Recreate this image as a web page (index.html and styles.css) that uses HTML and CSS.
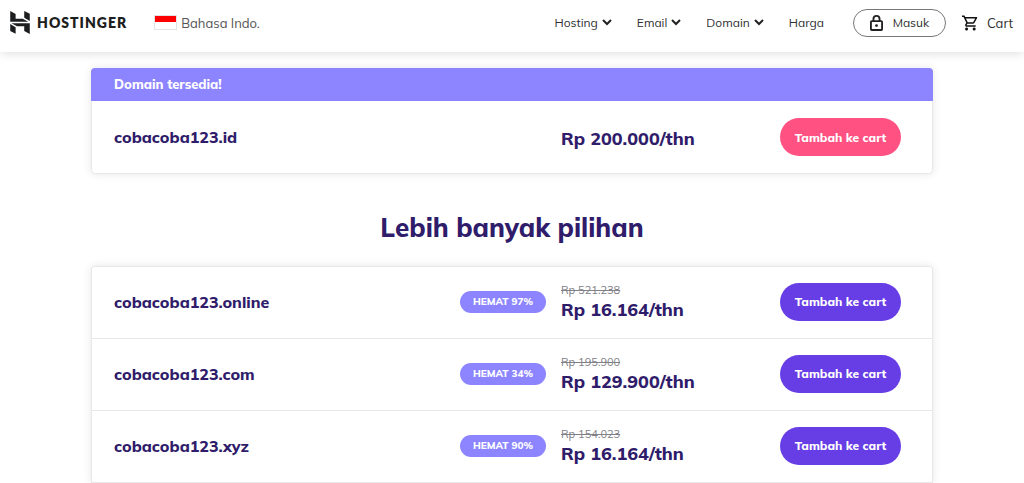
FILE: index.html
```html
<!DOCTYPE html>
<html lang="id">
<head>
<meta charset="utf-8">
<meta name="viewport" content="width=device-width, initial-scale=1">
<title>Hostinger</title>
<link rel="stylesheet" href="styles.css">
</head>
<body>
<header class="topbar">
  <a class="brand" href="#">
    <svg class="brand-mark" viewBox="1.8 0 20.4 24" aria-hidden="true"><path d="M16.415 0v7.160l5.785 3.384V2.949L16.415 0ZM1.800 0v11.237h18.815L14.890 8.090l-7.457-.003V3.024L1.800 0Zm14.615 20.894v-5.019l-7.514-.005-5.820-3.197 19.119.091V24l-5.785-3.106ZM1.800 13.551v7.343l5.633 2.949v-6.988l-5.633-3.304Z"/></svg>
    <span class="brand-name">HOSTINGER</span>
  </a>
  <a class="language" href="#"><span class="flag"></span>Bahasa Indo.</a>
  <nav class="menu">
    <a class="menu-link" href="#">Hosting<svg class="chevron" viewBox="0 0 10 7" aria-hidden="true"><path d="M1 1l4 4 4-4"/></svg></a>
    <a class="menu-link" href="#">Email<svg class="chevron" viewBox="0 0 10 7" aria-hidden="true"><path d="M1 1l4 4 4-4"/></svg></a>
    <a class="menu-link" href="#">Domain<svg class="chevron" viewBox="0 0 10 7" aria-hidden="true"><path d="M1 1l4 4 4-4"/></svg></a>
    <a class="menu-link" href="#">Harga</a>
  </nav>
  <a class="login" href="#"><svg class="lock" viewBox="0 0 14 17" aria-hidden="true"><path d="M1.800 6.500h10.400a.8.8 0 0 1 .8.8v7.900a.8.8 0 0 1-.8.8H1.800a.8.8 0 0 1-.8-.8V7.300a.8.8 0 0 1 .8-.8zM3.700 6.500V4.200a3.300 3.300 0 0 1 6.600 0v2.300"/><circle cx="7" cy="11.300" r="1.500"/></svg>Masuk</a>
  <a class="cart" href="#"><svg class="cart-icon" viewBox="1 2 21 20" aria-hidden="true"><path d="M15.550 13c.75 0 1.410-.41 1.750-1.030l3.580-6.490A.996.996 0 0 0 20.010 4H5.210l-.94-2H1v2h2l3.600 7.590-1.350 2.440C4.520 15.370 5.480 17 7 17h12v-2H7l1.100-2h7.450zM6.160 6h12.150l-2.760 5H8.530L6.160 6zM7 18c-1.100 0-1.990.9-1.990 2S5.900 22 7 22s2-.9 2-2-.9-2-2-2zm10 0c-1.100 0-1.990.9-1.990 2s.89 2 1.990 2 2-.9 2-2-.9-2-2-2z"/></svg>Cart</a>
</header>
<main class="results">
  <section class="card">
    <h2 class="card-title">Domain tersedia!</h2>
    <div class="row">
      <h3 class="name">cobacoba123.id</h3>
      <div class="price featured-price">Rp 200.000/thn</div>
      <button class="add add-featured" type="button">Tambah ke cart</button>
    </div>
  </section>
  <h1 class="heading">Lebih banyak pilihan</h1>
  <section class="card options">
    <div class="row">
      <h3 class="name">cobacoba123.online</h3>
      <span class="badge">HEMAT 97%</span>
      <div class="price"><s class="old">Rp 521.238</s>Rp 16.164/thn</div>
      <button class="add" type="button">Tambah ke cart</button>
    </div>
    <div class="row">
      <h3 class="name">cobacoba123.com</h3>
      <span class="badge">HEMAT 34%</span>
      <div class="price"><s class="old">Rp 195.900</s>Rp 129.900/thn</div>
      <button class="add" type="button">Tambah ke cart</button>
    </div>
    <div class="row">
      <h3 class="name">cobacoba123.xyz</h3>
      <span class="badge">HEMAT 90%</span>
      <div class="price"><s class="old">Rp 154.023</s>Rp 16.164/thn</div>
      <button class="add" type="button">Tambah ke cart</button>
    </div>
  </section>
</main>
</body>
</html>
```
FILE: styles.css
```css
* { box-sizing: border-box; }
body {
  margin: 0;
  background: #fff;
  color: #303032;
  font-family: Mulish, Muli, Lato, sans-serif;
}
h1, h2, h3 { margin: 0; }
a { color: inherit; text-decoration: none; }
.topbar {
  display: flex;
  align-items: center;
  height: 52px;
  padding: 0 11px 7px 10px;
  box-shadow: 0 1px 10px rgba(0, 0, 0, .14);
  font-size: 13px;
}
.brand { display: flex; align-items: center; gap: 7px; color: #1d1e20; }
.brand-mark { width: 20px; height: 23px; fill: currentColor; }
.brand-name { font-family: Lato, sans-serif; font-size: 14px; font-weight: 800; letter-spacing: 1px; }
.language { display: flex; align-items: center; gap: 4px; margin-left: 27px; color: #555; }
.flag {
  width: 23px;
  height: 15px;
  border: 1px solid #e3e3e3;
  background: linear-gradient(#f00 50%, #fff 50%);
}
.menu { display: flex; gap: 25px; margin-left: auto; font-size: 12px; }
.menu-link { display: flex; align-items: center; gap: 4px; }
.chevron { width: 10px; height: 7px; overflow: visible; fill: none; stroke: #222; stroke-width: 2; }
.login {
  display: flex;
  align-items: center;
  justify-content: center;
  gap: 10px;
  width: 93px;
  height: 28px;
  margin-left: 29px;
  border: 1px solid #777;
  border-radius: 14px;
  font-size: 12px;
}
.lock { width: 13px; height: 16px; fill: none; stroke: #222; stroke-width: 2; }
.lock circle { fill: #222; stroke: none; }
.cart { display: flex; align-items: center; gap: 9px; margin-left: 16px; }
.cart-icon { width: 16px; height: 16px; fill: #111; }
.results { max-width: 842px; margin: 16px auto 0; }
.card {
  border: 1px solid #e8e8e8;
  border-radius: 4px;
  background: #fff;
  box-shadow: 0 0 8px rgba(0, 0, 0, .1);
}
.card-title {
  margin: -1px -1px 0;
  padding: 0 23px;
  border-radius: 4px 4px 0 0;
  background: #8c85ff;
  color: #fff;
  font-size: 13px;
  font-weight: 800;
  line-height: 33px;
}
.row {
  display: grid;
  grid-template-columns: 1fr 86px 204px 121px;
  column-gap: 15px;
  align-items: center;
  min-height: 72px;
  padding: 0 31px 0 22px;
  color: #2f1c6a;
}
.name { font-size: 16px; font-weight: 800; line-height: 24px; }
.price { grid-column: 3; font-size: 18px; font-weight: 800; line-height: 24px; }
.featured-price { padding-top: 4px; }
.old { display: block; color: #818188; font-size: 11px; font-weight: 400; line-height: 16px; }
.badge {
  border-radius: 11px;
  background: #8c85ff;
  color: #fff;
  font-size: 10px;
  font-weight: 800;
  line-height: 22px;
  text-align: center;
}
.add {
  height: 38px;
  padding: 0;
  border: 0;
  border-radius: 19px;
  background: #673de6;
  color: #fff;
  font: inherit;
  font-size: 12px;
  font-weight: 800;
}
.add-featured { background: #ff5182; }
.heading {
  padding: 36px 0 20px;
  color: #2f1c6a;
  font-size: 26px;
  font-weight: 800;
  line-height: 36px;
  text-align: center;
}
.options { border-bottom: 0; border-radius: 4px 4px 0 0; }
.options .row { padding-bottom: 2px; border-bottom: 1px solid #e8e8e8; }
```
